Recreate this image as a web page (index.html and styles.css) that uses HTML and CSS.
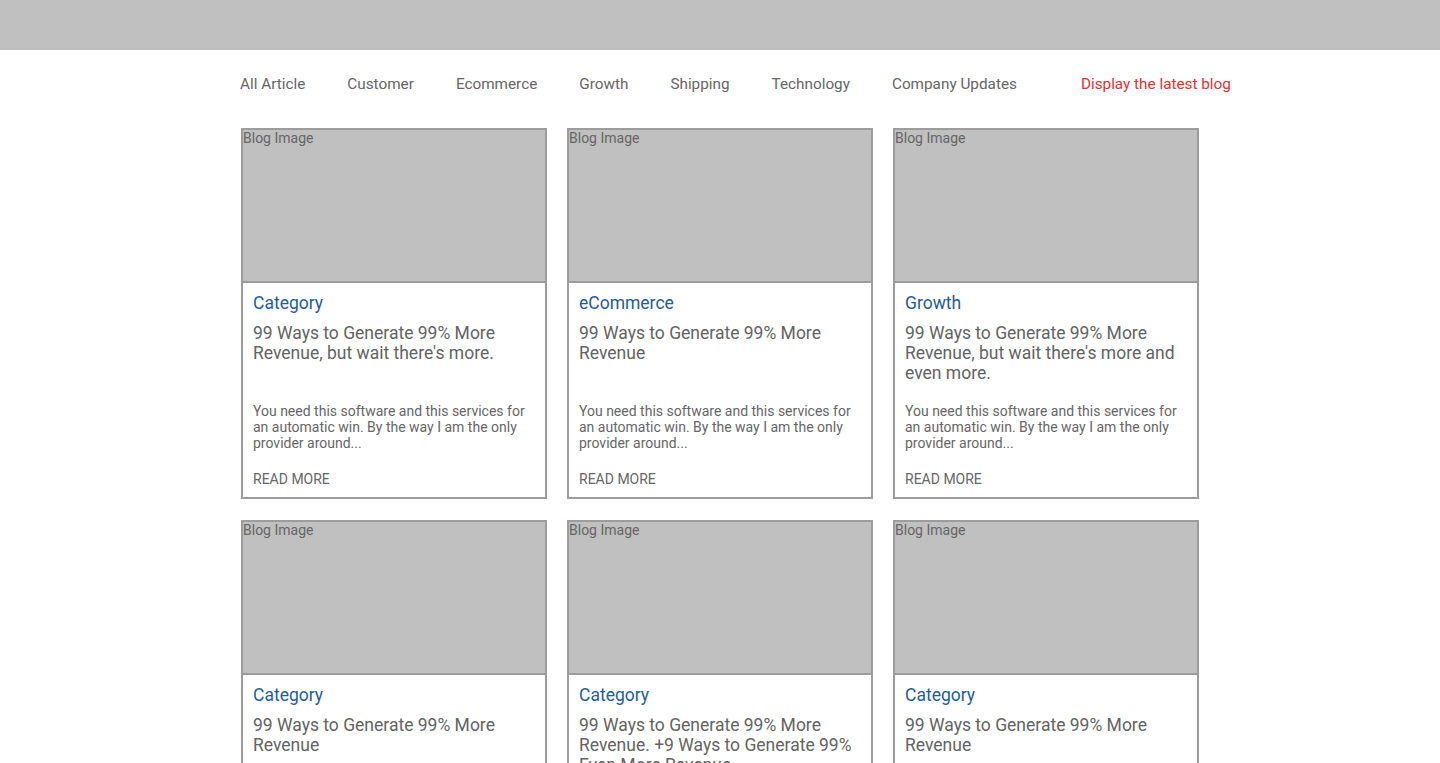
FILE: index.html
```html
<!DOCTYPE html>
<html lang="en">
<head>
<meta charset="utf-8">
<title>Blog</title>
<link rel="stylesheet" href="styles.css">
</head>
<body>
<header class="topbar"></header>
<main class="wrap">
  <nav class="nav">
    <a class="nav-item">All Article</a>
    <a class="nav-item">Customer</a>
    <a class="nav-item">Ecommerce</a>
    <a class="nav-item">Growth</a>
    <a class="nav-item">Shipping</a>
    <a class="nav-item">Technology</a>
    <a class="nav-item">Company Updates</a>
    <a class="nav-item nav-latest">Display the latest blog</a>
  </nav>
  <section class="grid">
    <article class="card">
      <div class="card-img">Blog Image</div>
      <div class="card-body">
        <div class="cat">Category</div>
        <h2 class="title">99 Ways to Generate 99% More Revenue, but wait there's more.</h2>
        <p class="desc">You need this software and this services for an automatic win. By the way I am the only provider around...</p>
        <a class="more">READ MORE</a>
      </div>
    </article>
    <article class="card">
      <div class="card-img">Blog Image</div>
      <div class="card-body">
        <div class="cat">eCommerce</div>
        <h2 class="title">99 Ways to Generate 99% More Revenue</h2>
        <p class="desc">You need this software and this services for an automatic win. By the way I am the only provider around...</p>
        <a class="more">READ MORE</a>
      </div>
    </article>
    <article class="card">
      <div class="card-img">Blog Image</div>
      <div class="card-body">
        <div class="cat">Growth</div>
        <h2 class="title">99 Ways to Generate 99% More Revenue, but wait there's more and even more.</h2>
        <p class="desc">You need this software and this services for an automatic win. By the way I am the only provider around...</p>
        <a class="more">READ MORE</a>
      </div>
    </article>
    <article class="card">
      <div class="card-img">Blog Image</div>
      <div class="card-body">
        <div class="cat">Category</div>
        <h2 class="title">99 Ways to Generate 99% More Revenue</h2>
        <p class="desc">You need this software and this services for an automatic win. By the way I am the only provider around...</p>
        <a class="more">READ MORE</a>
      </div>
    </article>
    <article class="card">
      <div class="card-img">Blog Image</div>
      <div class="card-body">
        <div class="cat">Category</div>
        <h2 class="title">99 Ways to Generate 99% More Revenue. +9 Ways to Generate 99% Even More Revenue</h2>
        <p class="desc">You need this software and this services for an automatic win. By the way I am the only provider around...</p>
        <a class="more">READ MORE</a>
      </div>
    </article>
    <article class="card">
      <div class="card-img">Blog Image</div>
      <div class="card-body">
        <div class="cat">Category</div>
        <h2 class="title">99 Ways to Generate 99% More Revenue</h2>
        <p class="desc">You need this software and this services for an automatic win. By the way I am the only provider around...</p>
        <a class="more">READ MORE</a>
      </div>
    </article>
  </section>
</main>
</body>
</html>
```

FILE: styles.css
```css
* { box-sizing: border-box; }
html, body { margin: 0; padding: 0; background: #fff; }
body {
  font-family: Roboto, "Liberation Sans", Arial, sans-serif;
  color: #666;
}
.topbar {
  height: 50px;
  background: #c0c0c0;
}
.wrap {
  width: 960px;
  margin: 0 auto;
}
.nav {
  display: flex;
  align-items: center;
  gap: 42px;
  margin-top: 24px;
  font-size: 15.3px;
  line-height: 20px;
  white-space: nowrap;
}
.nav-item {
  flex: none;
  color: #666;
  text-decoration: none;
}
.nav-latest {
  color: #e63030;
  margin-left: 22px;
}
.grid {
  display: grid;
  grid-template-columns: repeat(3, 306px);
  column-gap: 20px;
  row-gap: 21px;
  margin-top: 34px;
  padding-left: 1px;
}
.card {
  border: 2px solid #9c9c9c;
  background: #fff;
}
.card-img {
  height: 153px;
  background: #c0c0c0;
  border-bottom: 2px solid #9c9c9c;
  font-size: 14px;
  line-height: 16px;
  color: #666;
}
.card-body {
  padding: 10px 10px 10px;
}
.cat {
  color: #1f5c98;
  font-size: 17.5px;
  font-weight: 400;
  line-height: 20px;
}
.title {
  margin: 10px 0 0;
  font-size: 17.5px;
  line-height: 20px;
  font-weight: 400;
  color: #636363;
  min-height: 60px;
}
.desc {
  margin: 20px 0 0;
  font-size: 14px;
  line-height: 16px;
  color: #666;
}
.more {
  display: block;
  margin-top: 20px;
  font-size: 14px;
  line-height: 16px;
  color: #666;
}
```
